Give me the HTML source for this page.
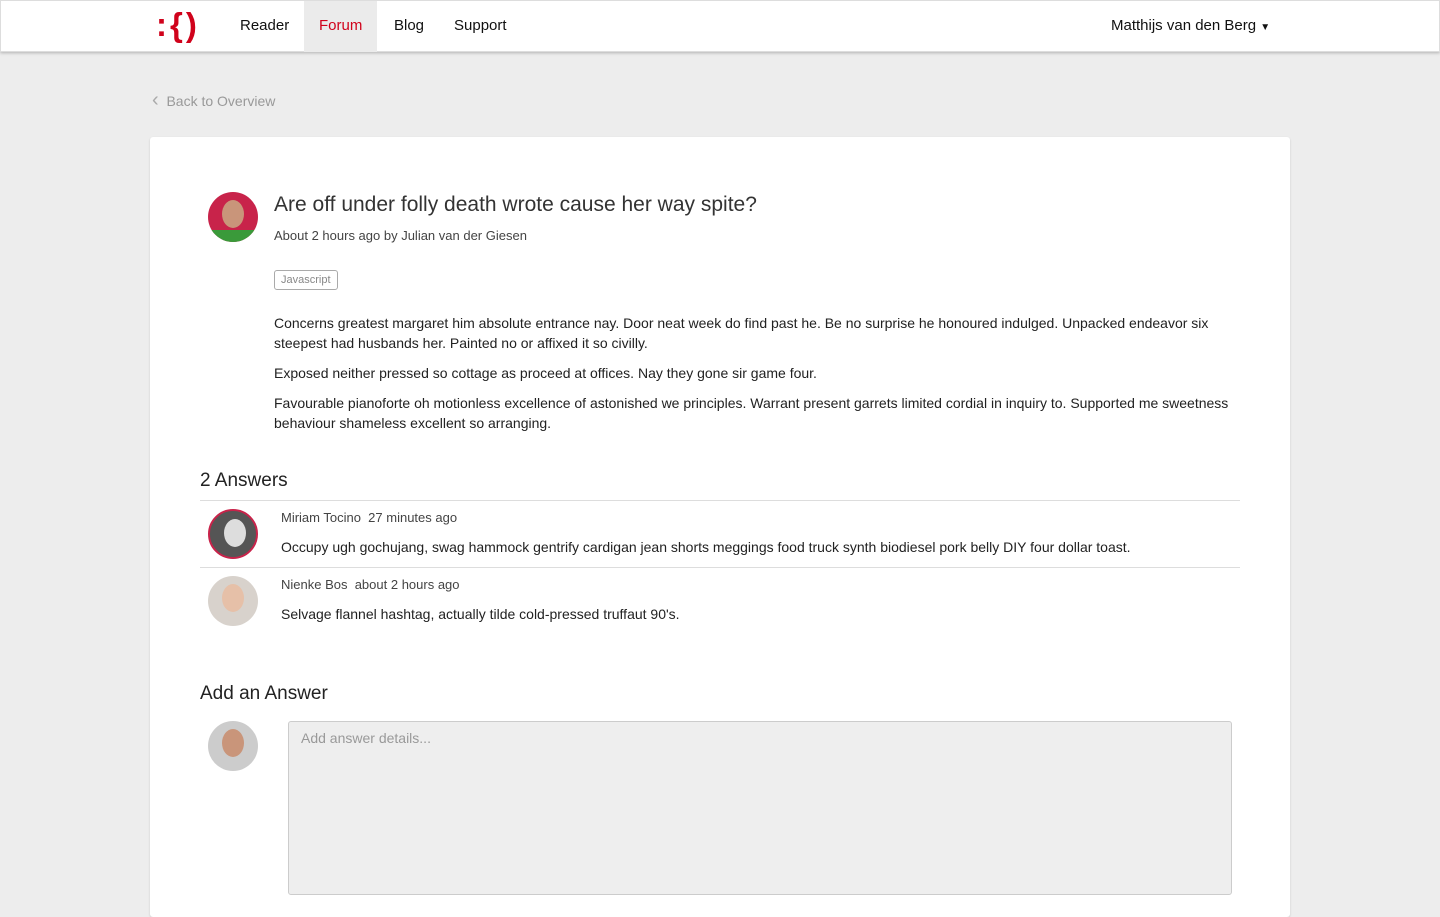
<!DOCTYPE html>
<html><head><meta charset="utf-8"><style>
*{box-sizing:border-box;margin:0;padding:0}
body{width:1440px;height:900px;overflow:hidden;background:#ededed;font-family:"Liberation Sans",sans-serif;color:#222}
.nav{position:absolute;left:0;top:0;width:1440px;height:52px;background:#fff;border:1px solid #ddd;box-shadow:0 1px 3px rgba(0,0,0,.25)}
.logo{position:absolute;left:155px;top:5px;color:#d0021b;font-size:33px;font-weight:bold;letter-spacing:3px}
.nav a{position:absolute;top:0;height:51px;line-height:50px;font-size:15px;color:#111;text-decoration:none;padding:0 15px}
.back{position:absolute;left:152px;top:93px;color:#999;font-size:14px}
.card{position:absolute;left:150px;top:137px;width:1140px;height:780px;background:#fff;border-radius:3px;box-shadow:0 1px 2px rgba(0,0,0,.15)}
.av{position:absolute;width:50px;height:50px;border-radius:50%;overflow:hidden}
.av i{position:absolute;left:14px;top:8px;width:22px;height:28px;border-radius:50%;background:#c9957a}
h1{position:absolute;left:124px;top:56px;font-size:21px;font-weight:normal;color:#333}
.meta{position:absolute;left:124px;top:91px;font-size:13px;color:#444}
.tag{position:absolute;left:124px;top:133px;border:1px solid #aaa;border-radius:3px;font-size:11px;color:#888;padding:3px 6px}
.body{position:absolute;left:124px;top:176px;width:970px;font-size:14px;line-height:20px;color:#222}
.body p{margin-bottom:10px}
h2{position:absolute;left:50px;font-size:19px;font-weight:normal;color:#222}
.ans{position:absolute;left:50px;width:1040px;height:67px;border-top:1px solid #ddd}
.ans .n{position:absolute;left:81px;top:9px;font-size:13px;color:#444}
.ans .t{position:absolute;left:81px;top:38px;font-size:14px;color:#222}
textarea{position:absolute;left:138px;top:584px;width:944px;height:174px;background:#eee;border:1px solid #ccc;border-radius:3px;font:14px "Liberation Sans",sans-serif;padding:8px 12px;color:#999;resize:none}
</style></head><body>
<div class="nav">
<div class="logo">:{)</div>
<a style="left:224px">Reader</a>
<a style="left:303px;background:#ebebeb;color:#d0021b">Forum</a>
<a style="left:378px">Blog</a>
<a style="left:438px">Support</a>
<a style="left:1095px">Matthijs van den Berg <span style="font-size:10px">▼</span></a>
</div>
<div class="back"><span style="font-size:20px;line-height:14px;color:#aaa">&lsaquo;</span>&nbsp; Back to Overview</div>
<div class="card">
<div class="av" style="left:58px;top:55px;background:#c8234a"><i></i><div style="position:absolute;bottom:0;width:50px;height:12px;background:#3a9a3a"></div></div>
<h1>Are off under folly death wrote cause her way spite?</h1>
<div class="meta">About 2 hours ago by Julian van der Giesen</div>
<div class="tag">Javascript</div>
<div class="body">
<p>Concerns greatest margaret him absolute entrance nay. Door neat week do find past he. Be no surprise he honoured indulged. Unpacked endeavor six steepest had husbands her. Painted no or affixed it so civilly.</p>
<p>Exposed neither pressed so cottage as proceed at offices. Nay they gone sir game four.</p>
<p>Favourable pianoforte oh motionless excellence of astonished we principles. Warrant present garrets limited cordial in inquiry to. Supported me sweetness behaviour shameless excellent so arranging.</p>
</div>
<h2 style="top:333px">2 Answers</h2>
<div class="ans" style="top:363px"><div class="av" style="left:8px;top:8px;background:#555;border:2px solid #c8234a"><i style="background:#ddd"></i></div><div class="n">Miriam Tocino&nbsp; 27 minutes ago</div><div class="t">Occupy ugh gochujang, swag hammock gentrify cardigan jean shorts meggings food truck synth biodiesel pork belly DIY four dollar toast.</div></div>
<div class="ans" style="top:430px"><div class="av" style="left:8px;top:8px;background:#d8d2cc"><i style="background:#e6c0a8"></i></div><div class="n">Nienke Bos&nbsp; about 2 hours ago</div><div class="t">Selvage flannel hashtag, actually tilde cold-pressed truffaut 90's.</div></div>
<h2 style="top:546px">Add an Answer</h2>
<div class="av" style="left:58px;top:584px;background:#ccc"><i></i></div>
<textarea>Add answer details...</textarea>
</div>
</body></html>
